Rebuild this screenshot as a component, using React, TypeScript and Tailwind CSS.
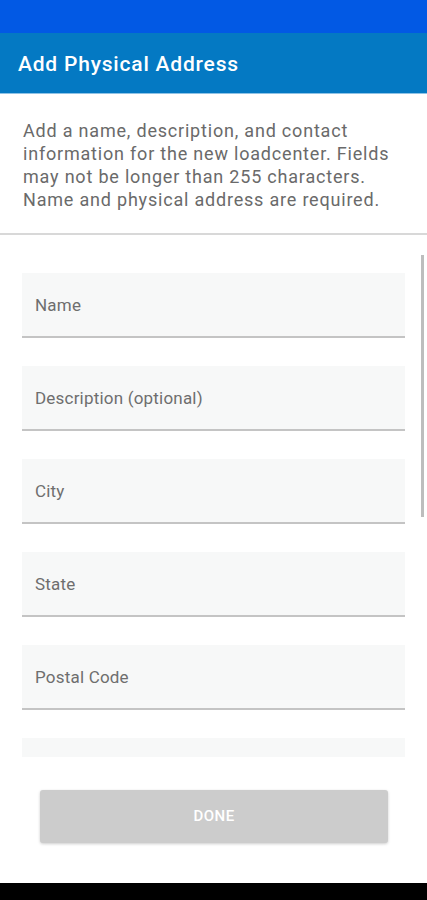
export default function App() {
  const fields = ["Name", "Description (optional)", "City", "State", "Postal Code", ""];

  return (
    <div className="w-[427px] h-[900px] flex flex-col bg-white overflow-hidden" style={{ fontFamily: "Roboto, 'Liberation Sans', sans-serif" }}>
      <div className="h-[33px] shrink-0 bg-[#0259E4]" />
      <div className="h-[61px] shrink-0 bg-[#0479C3] border-b border-[#8fc3e6] flex items-center px-[18px] pt-[3px]">
        <h1 className="text-white text-[21px] font-medium tracking-[0.8px]">Add Physical Address</h1>
      </div>

      <div className="h-[139px] shrink-0 px-[23px] pt-[25px]">
        <p className="text-[18px] leading-[23px] tracking-[0.8px] text-[#6a6a6a]">
          Add a name, description, and contact information for the new loadcenter. Fields may not be longer than 255 characters. Name and physical address are required.
        </p>
      </div>
      <div className="h-[2px] shrink-0 bg-[#d8d8d8]" />

      <div className="relative h-[522px] shrink-0 overflow-hidden">
        <div className="flex flex-col gap-[28px] pt-[38px] px-[22px] pr-[22px]">
          {fields.map((f, i) => (
            <div
              key={i}
              className={`h-[65px] w-[383px] shrink-0 bg-[#f7f8f8] flex items-center pl-[13px] pt-[2px] ${f ? "border-b-2 border-[#c4c4c4]" : ""}`}
            >
              <span className="text-[17px] tracking-[0.2px] text-[#6e6e6e]">{f}</span>
            </div>
          ))}
        </div>
        <div className="absolute left-[421px] top-[20px] w-[3px] h-[262px] bg-[#bdbdbd]" />
      </div>

      <div className="h-[126px] shrink-0 bg-white pt-[33px] px-[40px]">
        <button className="w-[348px] h-[53px] bg-[#cccccc] rounded-[3px] shadow-[0_1px_3px_rgba(0,0,0,0.2)] text-white text-[15px] font-medium tracking-[0.5px]">
          DONE
        </button>
      </div>
      <div className="h-[17px] shrink-0 bg-black" />
    </div>
  );
}
